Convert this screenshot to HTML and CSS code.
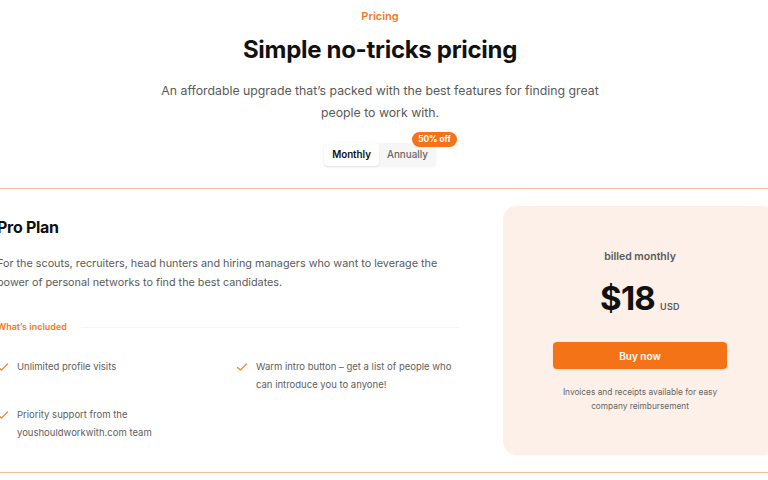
FILE: index.html
```html
<!DOCTYPE html>
<html lang="en">
<head>
    <meta charset="UTF-8">
    <meta name="viewport" content="width=device-width, initial-scale=1.0">
    <title>Pricing</title>
    <link rel="stylesheet" href="styles.css">
</head>
<body>
    <section class="pricing">
        <div class="intro">
            <p class="eyebrow">Pricing</p>
            <h1>Simple no-tricks pricing</h1>
            <p class="lead">An affordable upgrade that’s packed with the best features for finding great people to work with.</p>
            <div class="toggle">
                <button class="toggle-btn active">Monthly</button>
                <button class="toggle-btn">Annually</button>
                <span class="badge">50% off</span>
            </div>
        </div>

        <div class="card">
            <div class="plan">
                <h2>Pro Plan</h2>
                <p class="plan-desc">For the scouts, recruiters, head hunters and hiring managers who want to leverage the power of personal networks to find the best candidates.</p>
                <div class="included">
                    <h3>What’s included</h3>
                    <div class="rule"></div>
                </div>
                <ul class="features">
                    <li>
                        <svg class="check" viewBox="0 0 12 12"><polyline points="1.5,6.5 4.5,9 10.5,3"/></svg>
                        <span>Unlimited profile visits</span>
                    </li>
                    <li>
                        <svg class="check" viewBox="0 0 12 12"><polyline points="1.5,6.5 4.5,9 10.5,3"/></svg>
                        <span>Warm intro button – get a list of people who can introduce you to anyone!</span>
                    </li>
                    <li>
                        <svg class="check" viewBox="0 0 12 12"><polyline points="1.5,6.5 4.5,9 10.5,3"/></svg>
                        <span>Priority support from the youshouldworkwith.com team</span>
                    </li>
                </ul>
            </div>

            <div class="side">
                <div class="price-box">
                    <p class="billed">billed monthly</p>
                    <p class="price"><span class="amount">$18</span><span class="currency">USD</span></p>
                    <button class="buy">Buy now</button>
                    <p class="note">Invoices and receipts available for easy company reimbursement</p>
                </div>
            </div>
        </div>
    </section>
</body>
</html>
```

FILE: styles.css
```css
*{
    margin: 0;
    padding: 0;
    box-sizing: border-box;
}
html, body{
    overflow: hidden;
}
body{
    width: 768px;
    height: 480px;
    background: #fff;
    font-family: Inter, "Noto Sans", sans-serif;
    color: #111;
}
.pricing{
    padding-top: 8px;
}
.intro{
    text-align: center;
    padding-right: 8px;
}
.eyebrow{
    font-size: 11px;
    line-height: 16px;
    font-weight: 600;
    color: #f47a20;
}
h1{
    margin-top: 10px;
    font-size: 24px;
    line-height: 32px;
    font-weight: 700;
    letter-spacing: -0.3px;
    color: #111;
}
.lead{
    margin: 14px auto 0;
    width: 450px;
    font-size: 12.3px;
    line-height: 22px;
    color: #5a5a5a;
}
.toggle{
    position: relative;
    display: inline-flex;
    margin-top: 19px;
    background: #f6f6f6;
    border-radius: 4px;
    box-shadow: 0 1px 3px rgba(0,0,0,0.06);
}
.toggle-btn{
    border: none;
    background: transparent;
    font-family: inherit;
    font-size: 9.8px;
    font-weight: 500;
    color: #666;
    padding: 6px 8px;
    line-height: 11px;
    border-radius: 4px;
}
.toggle-btn.active{
    background: #fff;
    color: #111;
    font-weight: 600;
    box-shadow: 0 1px 2px rgba(0,0,0,0.08);
}
.badge{
    position: absolute;
    top: -11px;
    right: -21px;
    background: #f47316;
    color: #fff;
    font-size: 8.3px;
    font-weight: 700;
    line-height: 15px;
    padding: 0 6px;
    border-radius: 10px;
}
.card{
    display: flex;
    margin: 22px -26px 0 -28px;
    border: 1px solid #f3bf9c;
    border-radius: 22px;
    background: #fff;
}
.plan{
    flex: 1;
    padding: 26px 28px 0 24px;
}
h2{
    font-size: 16px;
    line-height: 24px;
    font-weight: 700;
    letter-spacing: -0.3px;
}
.plan-desc{
    margin-top: 15px;
    font-size: 10.8px;
    line-height: 19px;
    color: #5a5a5a;
}
.included{
    display: flex;
    align-items: center;
    gap: 14px;
    margin-top: 28px;
}
.included h3{
    font-size: 9px;
    line-height: 14px;
    font-weight: 600;
    color: #f47a20;
    white-space: nowrap;
}
.rule{
    flex: 1;
    height: 1px;
    background: #f6f6f6;
}
.features{
    list-style: none;
    display: grid;
    grid-template-columns: 1fr 1fr;
    column-gap: 16px;
    row-gap: 12px;
    margin-top: 24px;
}
.features li{
    display: flex;
    gap: 8px;
    font-size: 9.5px;
    line-height: 18px;
    color: #5e5e5e;
}
.check{
    flex-shrink: 0;
    width: 12px;
    height: 12px;
    margin-top: 3px;
    fill: none;
    stroke: #f08a3c;
    stroke-width: 1.4;
    stroke-linecap: round;
    stroke-linejoin: round;
}
.side{
    padding: 17px 16px 17px;
}
.price-box{
    width: 274px;
    height: 249px;
    background: #fdf0e8;
    border-radius: 14px;
    display: flex;
    flex-direction: column;
    align-items: center;
    text-align: center;
    padding-top: 43px;
}
.billed{
    font-size: 10.5px;
    line-height: 16px;
    font-weight: 600;
    color: #5a5a5a;
}
.price{
    display: flex;
    align-items: baseline;
    gap: 5px;
    margin-top: 15px;
}
.amount{
    font-size: 33px;
    line-height: 36px;
    font-weight: 700;
    letter-spacing: -0.8px;
    color: #111;
}
.currency{
    font-size: 9px;
    font-weight: 600;
    color: #5a5a5a;
    letter-spacing: 0.3px;
}
.buy{
    margin-top: 26px;
    width: 174px;
    height: 27px;
    border: none;
    border-radius: 4px;
    background: #f47316;
    color: #fff;
    font-family: inherit;
    font-size: 10px;
    font-weight: 600;
    box-shadow: 0 1px 2px rgba(0,0,0,0.08);
}
.note{
    margin-top: 16px;
    width: 170px;
    font-size: 8.3px;
    line-height: 14px;
    color: #666;
}
```
